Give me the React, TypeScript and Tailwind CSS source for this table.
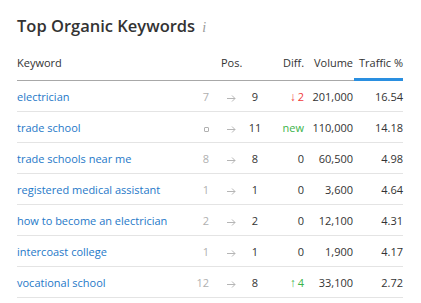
const rows = [
  { kw: "electrician", prev: "7", pos: "9", diff: "down", diffVal: "2", vol: "201,000", traffic: "16.54" },
  { kw: "trade school", prev: "new", pos: "11", diff: "new", diffVal: "new", vol: "110,000", traffic: "14.18" },
  { kw: "trade schools near me", prev: "8", pos: "8", diff: "zero", diffVal: "0", vol: "60,500", traffic: "4.98" },
  { kw: "registered medical assistant", prev: "1", pos: "1", diff: "zero", diffVal: "0", vol: "3,600", traffic: "4.64" },
  { kw: "how to become an electrician", prev: "2", pos: "2", diff: "zero", diffVal: "0", vol: "12,100", traffic: "4.31" },
  { kw: "intercoast college", prev: "1", pos: "1", diff: "zero", diffVal: "0", vol: "1,900", traffic: "4.17" },
  { kw: "vocational school", prev: "12", pos: "8", diff: "up", diffVal: "4", vol: "33,100", traffic: "2.72" },
];

function Diff({ type, val }: { type: string; val: string }) {
  if (type === "down") return <span className="text-[#f03a3a]"><span className="text-[12px] mr-[2px]">↓</span>{val}</span>;
  if (type === "up") return <span className="text-[#3cb34a]"><span className="text-[12px] mr-[2px]">↑</span>{val}</span>;
  if (type === "new") return <span className="text-[#3cb34a]">new</span>;
  return <span className="text-[#333]">{val}</span>;
}

const Arrow = () => (
  <svg width="9" height="7" viewBox="0 0 9 7" className="inline-block align-middle" fill="none" stroke="#b5b5b5" strokeWidth="1">
    <path d="M0 3.5h8M5 0.5l3 3-3 3" />
  </svg>
);

export default function App() {
  return (
    <div className="w-[421px] h-[303px] bg-white px-[17px] pt-[14px] text-[#333]" style={{ fontFamily: '"Open Sans", sans-serif' }}>
      <div className="flex items-baseline gap-[7px]">
        <h1 className="text-[16.5px] font-semibold text-[#333]">Top Organic Keywords</h1>
        <span className="text-[14px] italic text-[#999]" style={{ fontFamily: '"Liberation Serif", serif' }}>i</span>
      </div>
      <table className="w-[386px] mt-[9px] border-collapse table-fixed text-[11px] whitespace-nowrap">
        <colgroup>
          <col className="w-[172px]" />
          <col className="w-[20px]" />
          <col className="w-[36px]" />
          <col className="w-[20px]" />
          <col className="w-[39px]" />
          <col className="w-[49px]" />
          <col className="w-[50px]" />
        </colgroup>
        <thead>
          <tr className="h-[33px]">
            <th className="text-left font-normal border-b border-[#a8a8a8] pb-[2px]">Keyword</th>
            <th colSpan={3} className="font-normal border-b border-[#a8a8a8] text-left pl-[32px] pb-[2px]">Pos.</th>
            <th className="font-normal border-b border-[#a8a8a8] text-right pb-[2px]">Diff.</th>
            <th className="font-normal border-b border-[#a8a8a8] text-right pb-[2px]">Volume</th>
            <th className="font-normal text-right p-0 pb-[2px] relative border-b border-[#a8a8a8]">
              Traffic %
              <span className="absolute left-[1px] right-0 bottom-[-1px] h-[3px] bg-[#2a8fe0]" />
            </th>
          </tr>
        </thead>
        <tbody>
          {rows.map((r) => (
            <tr key={r.kw} className="h-[31px] border-b border-[#e4e4e4] [&>td]:pt-[2px]">
              <td className="text-[#1e78c8]">{r.kw}</td>
              <td className="text-right text-[#b0b0b0]">
                {r.prev === "new" ? (
                  <span className="inline-block w-[5px] h-[5px] border border-[#b0b0b0] rounded-[1px] align-middle" />
                ) : (
                  r.prev
                )}
              </td>
              <td className="text-right pr-[9px]"><Arrow /></td>
              <td className="text-center text-[#333]">{r.pos}</td>
              <td className="text-right"><Diff type={r.diff} val={r.diffVal} /></td>
              <td className="text-right">{r.vol}</td>
              <td className="text-right">{r.traffic}</td>
            </tr>
          ))}
        </tbody>
      </table>
    </div>
  );
}
